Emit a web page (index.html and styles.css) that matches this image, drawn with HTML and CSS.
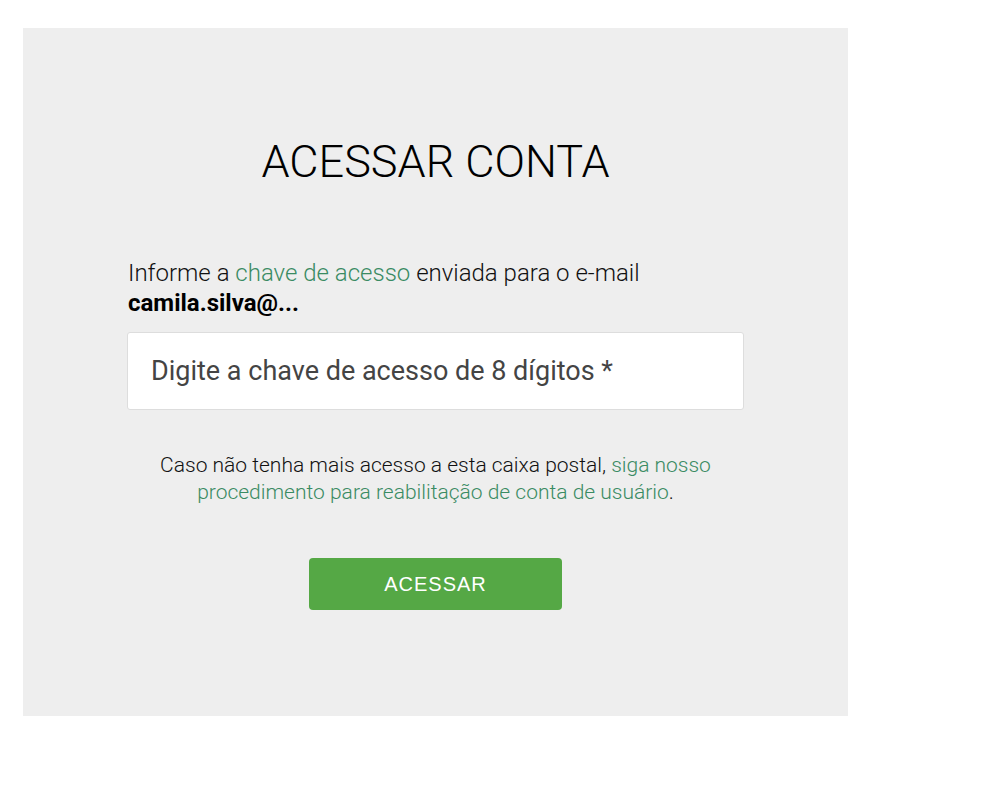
FILE: index.html
```html
<!DOCTYPE html>
<html lang="pt-BR">
<head>
    <meta charset="UTF-8">
    <meta name="viewport" content="width=device-width, initial-scale=1.0">
    <title>Acessar conta</title>
    <link rel="stylesheet" href="styles.css">
</head>
<body>

<div class="page">
    <div class="panel">
        <h1 class="title">ACESSAR CONTA</h1>

        <div class="content">
            <p class="intro">
                Informe a <a href="#" class="link">chave de acesso</a> enviada para o e-mail<br>
                <strong>camila.silva@...</strong>
            </p>

            <input class="key-input" type="text" placeholder="Digite a chave de acesso de 8 dígitos *">

            <p class="help">
                Caso não tenha mais acesso a esta caixa postal, <a href="#" class="link">siga nosso
                procedimento para reabilitação de conta de usuário</a>.
            </p>

            <div class="actions">
                <button class="btn-access" type="button">ACESSAR</button>
            </div>
        </div>
    </div>
</div>

</body>
</html>
```

FILE: styles.css
```css
body {
    margin: 0;
    background-color: #ffffff;
    font-family: 'Roboto', 'Liberation Sans', sans-serif;
    color: #111111;
}

.page {
    padding: 28px 23px;
}

.panel {
    width: 825px;
    height: 688px;
    box-sizing: border-box;
    background-color: #eeeeee;
    padding: 106px 104px 0 104px;
}

.title {
    margin: 0;
    text-align: center;
    font-size: 45px;
    font-weight: 300;
    line-height: 56px;
    color: #000000;
}

.intro {
    margin: 68px 0 0 1px;
    font-size: 24px;
    font-weight: 300;
    line-height: 30px;
    color: #111111;
}

.intro strong {
    font-weight: 700;
    font-size: 24px;
    color: #000000;
}

.link {
    color: #3a8b63;
    text-decoration: none;
}

.key-input {
    display: block;
    width: 617px;
    height: 78px;
    box-sizing: border-box;
    margin-top: 14px;
    padding: 0 23px;
    border: 1px solid #dddddd;
    border-radius: 3px;
    background-color: #ffffff;
    font-family: 'Roboto', 'Liberation Sans', sans-serif;
    font-size: 27px;
    color: #333333;
    outline: none;
}

.key-input::placeholder {
    color: #444444;
}

.help {
    margin: 42px 0 0 0;
    text-align: center;
    font-size: 21px;
    font-weight: 300;
    line-height: 27px;
    color: #111111;
}

.actions {
    display: flex;
    justify-content: center;
    margin-top: 52px;
}

.btn-access {
    width: 253px;
    height: 52px;
    border: none;
    border-radius: 4px;
    background-color: #55a845;
    color: #ffffff;
    font-family: 'Liberation Sans', Arial, sans-serif;
    font-size: 20px;
    letter-spacing: 1px;
    cursor: pointer;
}
```
